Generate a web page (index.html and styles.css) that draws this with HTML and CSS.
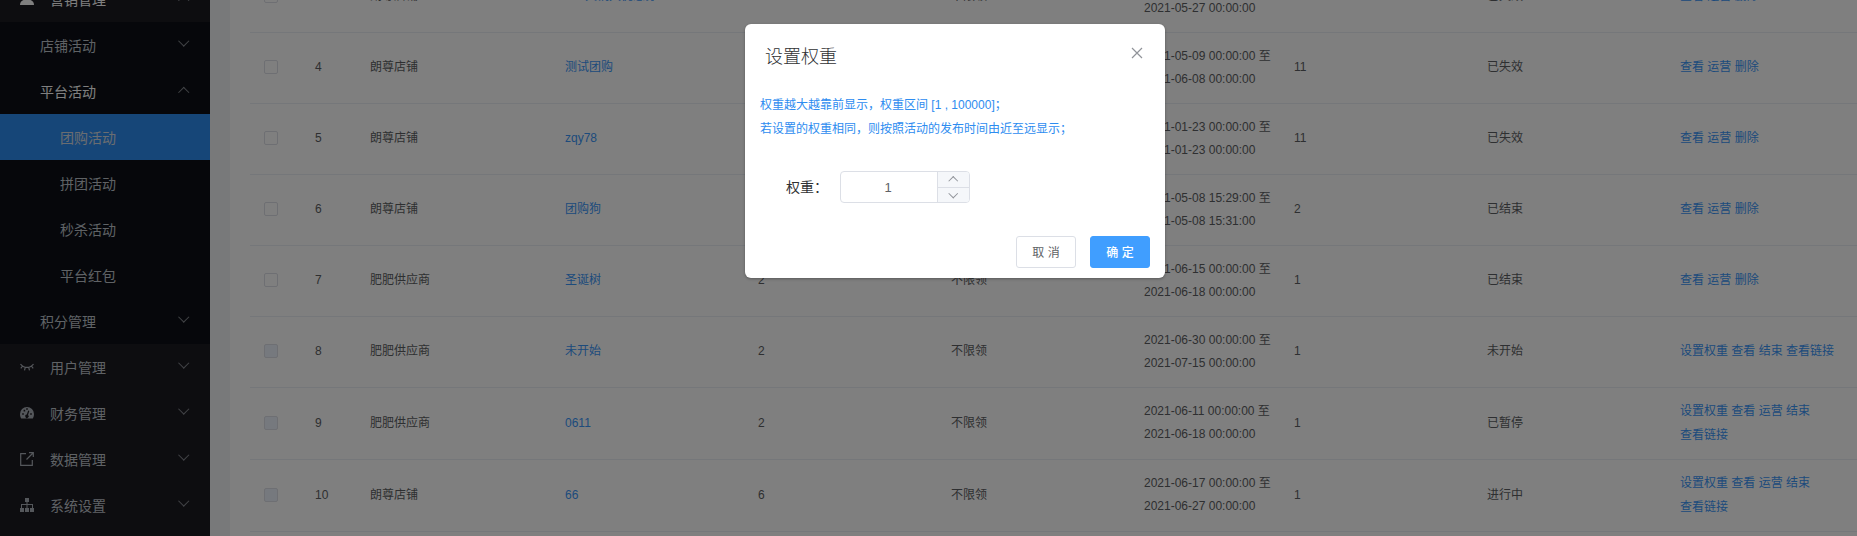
FILE: index.html
```html
<!DOCTYPE html>
<html lang="zh-CN">
<head>
<meta charset="utf-8">
<title>团购活动</title>
<link rel="stylesheet" href="styles.css">
</head>
<body>
<div class="app">
  <nav class="side">
    <div class="item top open"><svg class="ico" viewBox="0 0 14 14"><circle cx="7" cy="3.6" r="3.4"/><path d="M0 13c0-4 3-5.500 7-5.500s7 1.500 7 5.500z"/></svg><span>营销管理</span><i class="arrow up"></i></div>
    <div class="submenu">
      <div class="item sub"><span>店铺活动</span><i class="arrow"></i></div>
      <div class="item sub open"><span>平台活动</span><i class="arrow up"></i></div>
      <div class="item leaf active"><span>团购活动</span></div>
      <div class="item leaf"><span>拼团活动</span></div>
      <div class="item leaf"><span>秒杀活动</span></div>
      <div class="item leaf"><span>平台红包</span></div>
      <div class="item sub"><span>积分管理</span><i class="arrow"></i></div>
    </div>
    <div class="item top"><svg class="ico line" viewBox="0 0 14 14"><path d="M.5 4C3.500 8.500 10.500 8.500 13.500 4M2.600 6L.8 8.300M5.300 7.300L4.500 10.300M8.700 7.300l.8 3M11.400 6l1.800 2.300"/></svg><span>用户管理</span><i class="arrow"></i></div>
    <div class="item top"><svg class="ico" viewBox="0 0 14 14"><path fill-rule="evenodd" d="M7 1a7 7 0 0 0-7 7c0 1.700.5 3.300 1.200 4.500h11.600C13.500 11.300 14 9.700 14 8a7 7 0 0 0-7-7zM2.200 7.200h1.600v1.600H2.200zM3.600 3.800h1.600v1.600H3.600zM6.200 2.200h1.600v1.600H6.200zM10.200 7.200h1.600v1.600h-1.600zM8.200 4.500l1.100.4-1.300 4a1.700 1.700 0 1 1-1.200-.3z"/></svg><span>财务管理</span><i class="arrow"></i></div>
    <div class="item top"><svg class="ico line" viewBox="0 0 14 14"><path d="M6 1.700H.7v11.600h11.600V8M6.500 7.500L13 1M9 .7h4.300V5"/></svg><span>数据管理</span><i class="arrow"></i></div>
    <div class="item top"><svg class="ico" viewBox="0 0 14 14"><path d="M5 0h4v4H7.500v2H13v4h1v4h-4v-4h2V7H7.500v3H9v4H5v-4h1.500V7H2v3h2v4H0v-4h1V6h5.500V4H5z"/></svg><span>系统设置</span><i class="arrow"></i></div>
  </nav>
  <main class="main">
    <div class="table">
      <div class="row"><div><i class="check"></i></div><div>3</div><div>朗尊店铺</div><div class="link indent">火锅大优惠券</div><div>2</div><div>不限领</div><div class="date">2021-05-20 00:00:00 至<br>2021-05-27 00:00:00</div><div>11</div><div>已失效</div><div class="link">查看 运营 删除</div></div>
      <div class="row"><div><i class="check"></i></div><div>4</div><div>朗尊店铺</div><div class="link">测试团购</div><div>2</div><div>不限领</div><div class="date">2021-05-09 00:00:00 至<br>2021-06-08 00:00:00</div><div>11</div><div>已失效</div><div class="link">查看 运营 删除</div></div>
      <div class="row"><div><i class="check"></i></div><div>5</div><div>朗尊店铺</div><div class="link">zqy78</div><div>2</div><div>不限领</div><div class="date">2021-01-23 00:00:00 至<br>2021-01-23 00:00:00</div><div>11</div><div>已失效</div><div class="link">查看 运营 删除</div></div>
      <div class="row"><div><i class="check"></i></div><div>6</div><div>朗尊店铺</div><div class="link">团购狗</div><div>2</div><div>不限领</div><div class="date">2021-05-08 15:29:00 至<br>2021-05-08 15:31:00</div><div>2</div><div>已结束</div><div class="link">查看 运营 删除</div></div>
      <div class="row"><div><i class="check"></i></div><div>7</div><div>肥肥供应商</div><div class="link">圣诞树</div><div>2</div><div>不限领</div><div class="date">2021-06-15 00:00:00 至<br>2021-06-18 00:00:00</div><div>1</div><div>已结束</div><div class="link">查看 运营 删除</div></div>
      <div class="row"><div><i class="check off"></i></div><div>8</div><div>肥肥供应商</div><div class="link">未开始</div><div>2</div><div>不限领</div><div class="date">2021-06-30 00:00:00 至<br>2021-07-15 00:00:00</div><div>1</div><div>未开始</div><div class="link">设置权重 查看 结束 查看链接</div></div>
      <div class="row tall"><div><i class="check off"></i></div><div>9</div><div>肥肥供应商</div><div class="link">0611</div><div>2</div><div>不限领</div><div class="date">2021-06-11 00:00:00 至<br>2021-06-18 00:00:00</div><div>1</div><div>已暂停</div><div class="link two">设置权重 查看 运营 结束<br>查看链接</div></div>
      <div class="row tall"><div><i class="check off"></i></div><div>10</div><div>朗尊店铺</div><div class="link">66</div><div>6</div><div>不限领</div><div class="date">2021-06-17 00:00:00 至<br>2021-06-27 00:00:00</div><div>1</div><div>进行中</div><div class="link two">设置权重 查看 运营 结束<br>查看链接</div></div>
    </div>
  </main>
</div>
<div class="mask">
  <section class="dialog">
    <header class="head"><h2>设置权重</h2><svg class="close" viewBox="0 0 12 12"><path d="M1 1l10 10M11 1L1 11"/></svg></header>
    <div class="tips">权重越大越靠前显示，权重区间 [1 , 100000]；<br>若设置的权重相同，则按照活动的发布时间由近至远显示；</div>
    <div class="field"><label>权重：</label>
      <div class="number"><span class="value">1</span><div class="steps"><span><i class="arrow up"></i></span><span><i class="arrow"></i></span></div></div>
    </div>
    <footer class="foot"><button class="btn">取 消</button><button class="btn primary">确 定</button></footer>
  </section>
</div>
</body>
</html>
```
FILE: styles.css
```css
* { box-sizing: border-box; }
html, body { margin: 0; height: 536px; overflow: hidden; }
body { font: 12px/23px "Liberation Sans", "Noto Sans CJK SC", sans-serif; color: #606266; background: #fff; }
.app { display: flex; height: 536px; overflow: hidden; }

.side { width: 210px; flex: none; background: #1b1a21; color: #bfc4cb; font-size: 14px; margin-top: -24px; height: 560px; }
.submenu { background: #0c0f16; }
.item { display: flex; align-items: center; height: 46px; padding-right: 21px; }
.item span { padding-top: 2px; }
.item.top { padding-left: 20px; }
.item.sub { padding-left: 40px; }
.item.leaf { padding-left: 60px; }
.item.active { background: #2d8cf0; color: #d5dbe2; }
.item.open { color: #fff; }
.item .ico { width: 14px; height: 14px; margin-right: 16px; fill: #a9aeb6; }
.item.open .ico { fill: #fff; }
.item .ico.line { fill: none; stroke: #a9aeb6; stroke-width: 1.200; }
.item .arrow { margin-left: auto; color: #85888f; }
.arrow { width: 10px; height: 10px; display: flex; align-items: center; justify-content: center; color: #909399; }
.arrow::before { content: ""; width: 6.500px; height: 6.500px; border: solid currentColor; border-width: 0 1px 1px 0; transform: translateY(-4px) rotate(45deg); }
.arrow.up::before { transform: translateY(2px) rotate(225deg); }

.main { flex: 1; min-width: 0; border-left: 20px solid #f0f2f5; padding-left: 20px; overflow: hidden; }
.table { width: 1613px; margin-top: -38px; }
.row { display: grid; grid-template-columns: 55px 55px 195px 193px 193px 193px 150px 193px 193px 193px; align-items: center; height: 71px; border-bottom: 1px solid #ebeef5; white-space: nowrap; }
.row > div { padding: 0 0 2px 10px; color: #5c5e62; }
.row > div.date { padding-bottom: 0; }
.row.tall { height: 72px; }
.row.tall > div { padding-bottom: 0; }
.row.tall > div.date { padding-bottom: 2px; }
.row > div.link { color: #3a96f8; }
.row > div.indent { padding-left: 30px; }
.row.tall > div.two { line-height: 24px; padding-bottom: 2px; }
.row > div:first-child { padding: 0 0 2px 14px; }
.check { display: block; width: 14px; height: 14px; border: 1px solid #dcdfe6; border-radius: 2px; background: #fff; }
.check.off { background: #edf2fc; }

.mask { position: absolute; inset: 0; background: rgba(0, 0, 0, .5); padding: 24px 0 0 745px; }
.dialog { display: flex; flex-direction: column; width: 420px; height: 254px; padding: 15px 15px 10px; background: #fff; border-radius: 6px; box-shadow: 0 1px 3px rgba(0, 0, 0, .3); }
.head { display: flex; align-items: flex-start; justify-content: space-between; padding: 5px 7px 0 5px; height: 54px; }
.head h2 { margin: 1px 0 0; font-size: 18px; line-height: 24px; font-weight: 300; color: #303133; }
.close { width: 12px; height: 12px; margin-top: 3px; stroke: #909399; stroke-width: 1.200; fill: none; }
.tips { line-height: 24px; color: #2d8cf0; }
.field { display: flex; align-items: center; margin-top: 30px; padding-left: 26px; }
.field label { width: 54px; font-size: 14px; color: #303133; }
.number { display: flex; width: 130px; height: 32px; border: 1px solid #dcdfe6; border-radius: 4px; overflow: hidden; }
.value { flex: 1; text-align: center; font-size: 13px; line-height: 31px; padding-right: 2px; color: #606266; }
.steps { width: 32px; display: grid; grid-template-rows: 15px 15px; border-left: 1px solid #dcdfe6; background: #f5f7fa; }
.steps span { display: flex; align-items: center; justify-content: center; }
.steps span + span { border-top: 1px solid #dcdfe6; }
.steps .arrow::before { width: 5.500px; height: 5.500px; transform: translateY(-2px) rotate(45deg); }
.steps .arrow.up::before { transform: translateY(2px) rotate(225deg); }
.foot { display: flex; justify-content: flex-end; gap: 14px; margin-top: auto; }
.btn { width: 60px; height: 32px; padding: 1px 0 0; border: 1px solid #dcdfe6; border-radius: 3px; background: #fff; color: #606266; font: 12px/30px "Liberation Sans", "Noto Sans CJK SC", sans-serif; }
.btn.primary { background: #409eff; border-color: #409eff; color: #fff; font-weight: 500; }
```
